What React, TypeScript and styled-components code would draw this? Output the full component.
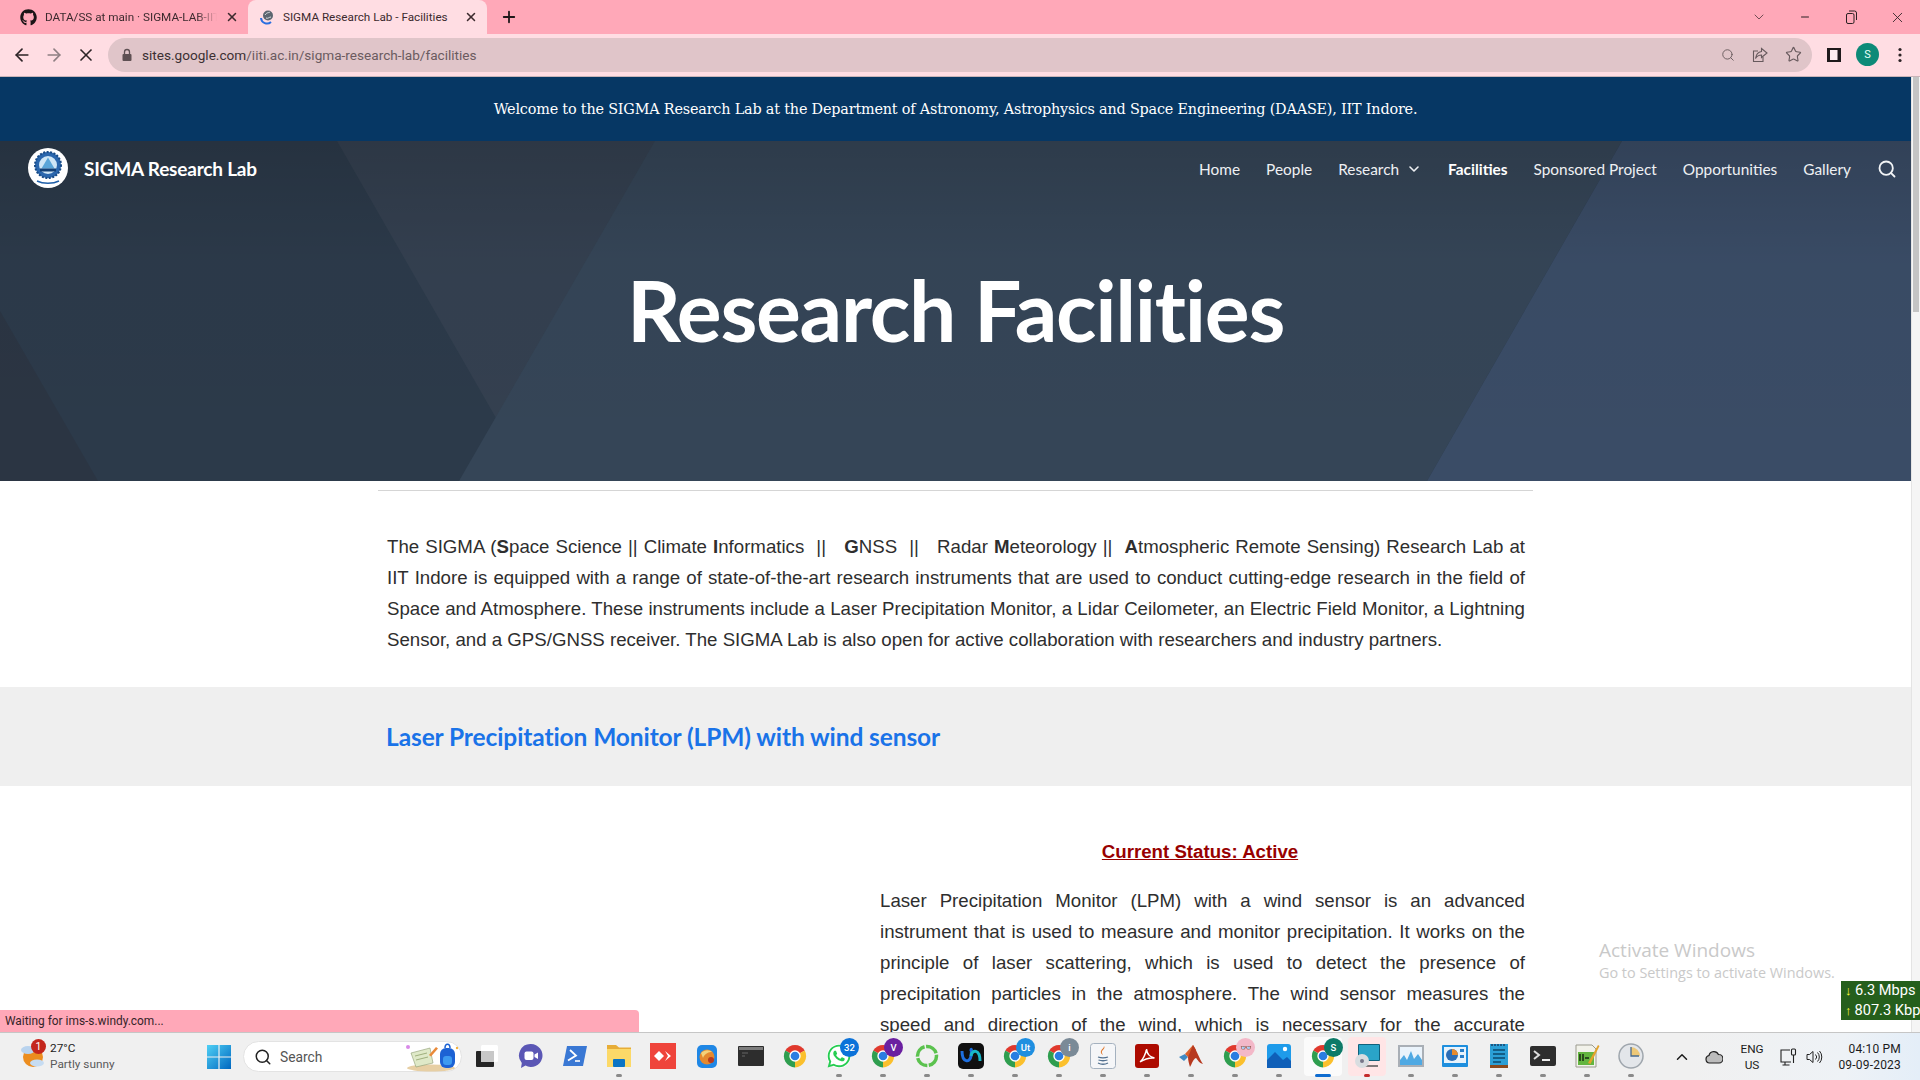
import React from "react";
import styled, { createGlobalStyle } from "styled-components";
import { ArrowLeft, ArrowRight, X, Plus, Search, Star, ChevronDown, ChevronUp, Minus } from "lucide-react";
import { FaGithub, FaWhatsapp } from "react-icons/fa";

const Global = createGlobalStyle`
  html, body { margin: 0; padding: 0; height: 100%; overflow: hidden; background: #fff; }
  #root { height: 100%; }
  * { box-sizing: border-box; }
`;

const Shell = styled.div`
  width: 1920px; height: 1080px; display: flex; flex-direction: column; overflow: hidden;
  font-family: Roboto, "Liberation Sans", sans-serif;
`;

/* Browser tab strip */
const TabStrip = styled.div`
  height: 34px; flex: none; background: #ffa8b8; display: flex; align-items: stretch; padding-left: 8px; color: #3c2a2e;
`;
const Tab = styled.div<{ $active?: boolean }>`
  width: ${p => (p.$active ? "239px" : "240px")}; position: relative; display: flex; align-items: center;
  padding: 0 9px 0 ${p => (p.$active ? "11px" : "12px")}; gap: 8px; font-size: 11.7px;
  background: ${p => (p.$active ? "#ffdde3" : "transparent")};
  border-radius: 8px 8px 0 0;
`;
const TabTitle = styled.span<{ $fade?: boolean }>`
  flex: 1; white-space: nowrap; overflow: hidden;
  ${p => p.$fade && "mask-image: linear-gradient(90deg, #000 88%, transparent 100%);"}
`;
const NewTab = styled.div`
  width: 44px; display: flex; align-items: center; justify-content: center; color: #1f1719;
`;
const WindowControls = styled.div`
  margin-left: auto; display: flex; align-items: center; padding-right: 0; color: #2b2022;
`;
const WinBtn = styled.div`
  width: 46px; height: 28px; display: flex; align-items: center; justify-content: center;
`;

/* Browser toolbar */
const Toolbar = styled.div`
  height: 43px; flex: none; background: #ffdde3; display: flex; align-items: center; padding: 0 0 1px 6px;
  border-bottom: 1px solid #c9b4b8; color: #2c2326;
`;
const NavBtn = styled.div<{ $dim?: boolean }>`
  width: 32px; height: 32px; display: flex; align-items: center; justify-content: center;
  color: ${p => (p.$dim ? "#8f7f83" : "#2c2326")};
`;
const Omnibox = styled.div`
  width: 1704px; height: 34px; margin-left: 6px; border-radius: 17px; background: #e0c5c9; display: flex; align-items: center;
  padding: 0 10px 0 12px; color: #5e5053;
`;
const Url = styled.span`
  margin-left: 8px; font-size: 13.6px; color: #3c3033; white-space: nowrap;
`;
const Path = styled.span`color: #6b5b5f;`;
const OmniIcons = styled.div`
  margin-left: auto; display: flex; align-items: center; gap: 17px; color: #675a5d;
`;
const ToolRight = styled.div`
  display: flex; align-items: center; margin-left: 15px; gap: 15px;
`;
const Avatar = styled.div`
  width: 23px; height: 23px; border-radius: 50%; background: #0d8a78; color: #e8fff9; font-size: 11px; margin-right: 4px;
  display: flex; align-items: center; justify-content: center;
`;

/* Page viewport */
const Viewport = styled.div`
  flex: 1; position: relative; overflow: hidden; display: flex; background: #fff;
`;
const Page = styled.div`
  flex: 1; min-width: 0; height: 100%; overflow: hidden;
`;
const Scrollbar = styled.div`
  width: 9px; flex: none; background: #f5f5f5; border-left: 1px solid #e4e4e4; padding: 0 1px 0 1px;
`;
const Thumb = styled.div`
  height: 235px; background: #c4c4c4; margin-top: 0;
`;
const Banner = styled.div`
  height: 64px; background: #063764; color: #fff; display: flex; align-items: center; justify-content: center;
  font-family: "DejaVu Serif", "Liberation Serif", serif; font-size: 14.4px; letter-spacing: -0.19px; padding-top: 0;
`;
const Hero = styled.header`
  height: 340px; position: relative; overflow: hidden; color: #fff; background: #2b3746;
`;
const HeroArt = styled.svg`
  position: absolute; inset: 0; width: 100%; height: 100%;
`;
const HeroInner = styled.div`
  position: relative; height: 100%; display: flex; flex-direction: column;
`;
const SiteBar = styled.div`
  height: 54px; display: flex; align-items: center; padding: 0 14px 0 28px;
  font-family: Lato, "Liberation Sans", sans-serif;
`;
const Brand = styled.div`
  display: flex; align-items: center; gap: 16px; font-size: 19px; font-weight: 700; letter-spacing: -0.2px;
`;
const Nav = styled.nav`
  margin-left: auto; padding-top: 2px; display: flex; align-items: center; gap: 26px; font-size: 15.4px; color: #f2f4f6;
`;
const NavLink = styled.span<{ $current?: boolean }>`
  display: inline-flex; align-items: center; gap: 7px; white-space: nowrap; font-weight: ${p => (p.$current ? 700 : 400)};
  color: ${p => (p.$current ? "#fff" : "#eef0f3")};
`;
const HeroTitle = styled.h1`
  margin: 60px 0 0; text-align: center; font-family: Lato, "Liberation Sans", sans-serif; font-size: 84px; line-height: 110px;
  font-weight: 700; letter-spacing: -1.3px;
`;
const Rule = styled.hr`
  width: 1155px; margin: 9px 0 0 378px; border: 0; border-top: 1px solid #d5d5d5;
`;
const Intro = styled.p`
  margin: 0; padding: 40px 386px 0 387px; font-family: "Liberation Sans", Arial, sans-serif; font-size: 18.67px; line-height: 31px;
  text-align: justify; color: #2e2e2e; height: 196px;
`;
const Band = styled.div`
  height: 99px; background: #efefef; display: flex; align-items: center; padding: 0 0 0 386px;
`;
const BandTitle = styled.h2`
  margin: 0; font-family: Lato, "Liberation Sans", sans-serif; font-size: 24.5px; font-weight: 700; color: #1a73e8; letter-spacing: -0.1px;
`;
const Feature = styled.section`
  display: grid; grid-template-columns: 880px 645px; padding-top: 50px;
`;
const FeatureText = styled.div`
  grid-column: 2; font-family: "Liberation Sans", Arial, sans-serif; font-size: 18.67px; line-height: 31px; color: #2e2e2e;
`;
const Status = styled.p`
  margin: 0 0 18px; padding-right: 5px; text-align: center; font-weight: 700; color: #980000; text-decoration: underline; line-height: 31px;
`;
const Body = styled.p`
  margin: 0; text-align: justify;
`;

/* Overlays on the viewport */
const StatusBubble = styled.div`
  position: absolute; left: 0; bottom: 0; width: 639px; height: 22px; background: #ffa8b8; border-radius: 0 4px 0 0;
  font-size: 11.9px; color: #352428; display: flex; align-items: center; padding-left: 5px;
`;
const Watermark = styled.div`
  position: absolute; left: 1599px; top: 860px; color: #c9c9c9; font-family: "Open Sans", sans-serif; white-space: nowrap;
`;
const WatermarkTitle = styled.div`font-size: 19px; line-height: 26px;`;
const WatermarkSub = styled.div`font-size: 14.4px; line-height: 20px;`;
const Speed = styled.div`
  position: absolute; right: 0; top: 904px; width: 79px; height: 39px; background: #255f1c; color: #fff;
  font-size: 14.6px; line-height: 19.5px; overflow: hidden; white-space: nowrap; padding-left: 4px;
`;
const SpeedRow = styled.div`display: flex; gap: 3px; align-items: center;`;
const SpeedArrow = styled.span`color: #ffff3a; font-size: 13px; font-weight: 900; width: 7px;`;

/* Taskbar */
const Taskbar = styled.div`
  height: 48px; flex: none; display: flex; align-items: center; border-top: 1px solid #c6c6c6;
  background: linear-gradient(90deg, #f0f0f0 0%, #f0f0f0 88%, #eef2f6 96%, #e4eef8 100%);
  color: #1c1c1c; position: relative;
`;
const Weather = styled.div`
  width: 196px; height: 100%; display: flex; align-items: center; padding: 0 0 2px 20px; gap: 6px;
`;
const WeatherIcon = styled.div`
  width: 24px; height: 24px; position: relative;
`;
const WeatherBadge = styled.span`
  position: absolute; top: -5px; right: -2px; width: 15px; height: 15px; border-radius: 50%; background: #c4261d; color: #fff;
  font-size: 10.5px; display: flex; align-items: center; justify-content: center;
`;
const WeatherText = styled.div`
  font-size: 11.8px; line-height: 16px;
`;
const Muted = styled.div`color: #5a5a5a;`;
const Start = styled.div`
  width: 46px; display: flex; align-items: center; justify-content: center;
`;
const SearchPill = styled.div`
  width: 219px; height: 31px; margin-left: 1px; border-radius: 16px; background: #fff; border: 1px solid #e3e3e3; display: flex; align-items: center;
  padding: 0 2px 0 10px; font-size: 13.8px; color: #555; gap: 8px;
`;
const PillArt = styled.div`margin-left: auto; display: flex;`;
const Dock = styled.div`
  display: flex; margin-left: 3px;
`;
const DockItem = styled.div<{ $tone?: "active" | "alert" }>`
  width: 44px; height: 47px; position: relative; display: flex; align-items: center; justify-content: center; padding-bottom: 1px;
  &::before {
    content: ""; position: absolute; top: 4px; bottom: 4px; left: 3px; right: 3px; border-radius: 4px;
    background: ${p => (p.$tone === "active" ? "#fbfbfb" : p.$tone === "alert" ? "#ffe5e6" : "transparent")};
  }
  & > * { position: relative; }
`;
const Dot = styled.span<{ $kind: "gray" | "blue" | "red" }>`
  position: absolute !important; bottom: 3px; left: 50%; transform: translateX(-50%); height: 3px; border-radius: 2px;
  width: ${p => (p.$kind === "blue" ? "16px" : "6px")};
  background: ${p => (p.$kind === "blue" ? "#0f6cd0" : p.$kind === "red" ? "#c42b2b" : "#8a8a8a")};
`;
const IconWrap = styled.div`
  width: 26px; height: 26px; display: flex; position: relative;
`;
const Badge = styled.span<{ $bg: string }>`
  position: absolute; top: -5px; right: -7px; width: 19px; height: 19px; border-radius: 50%; background: ${p => p.$bg}; color: #fff;
  font-size: 9.5px; display: flex; align-items: center; justify-content: center; font-weight: 500;
`;
const Tray = styled.div`
  margin-left: auto; width: 254px; height: 100%; display: flex; align-items: center;
`;
const TrayCell = styled.div<{ $w: number }>`
  width: ${p => p.$w}px; display: flex; align-items: center; justify-content: center; text-align: center; font-size: 11.8px; line-height: 16px;
`;
const Clock = styled.div`
  margin-left: auto; padding-right: 19px; text-align: right; font-size: 12px; line-height: 16px; letter-spacing: 0.2px;
`;

/* Drawn icons */
const Chrome = () => (
  <svg width="26" height="26" viewBox="0 0 48 48">
    <path d="M24 24 6 14A21 21 0 0 1 42 14Z" fill="#e0392d" />
    <path d="M24 24 42 14A21 21 0 0 1 24 45Z" fill="#fbc02d" />
    <path d="M24 24V45A21 21 0 0 1 6 14Z" fill="#2f9e4f" />
    <circle cx="24" cy="24" r="10.5" fill="#fff" />
    <circle cx="24" cy="24" r="8" fill="#2a7de1" />
  </svg>
);
const TaskView = () => (
  <svg width="26" height="26" viewBox="0 0 26 26">
    <rect x="7" y="2" width="17" height="17" rx="1.5" fill="#fff" />
    <rect x="2" y="8" width="18" height="16" rx="1" fill="#252525" />
    <rect x="7" y="8" width="13" height="11" fill="#c8c8c8" />
  </svg>
);
const Meet = () => (
  <svg width="26" height="26" viewBox="0 0 26 26">
    <path d="M13 1a11.5 11.5 0 1 1-5.5 21.6L3 25l.8-5A11.5 11.5 0 0 1 13 1Z" fill="#5b57b5" />
    <rect x="6.5" y="8.5" width="9" height="8.5" rx="2" fill="#fff" />
    <path d="m16.5 11.5 3.5-2v6.400l-3.500-2Z" fill="#fff" />
  </svg>
);
const PowerShell = () => (
  <svg width="26" height="26" viewBox="0 0 26 26">
    <path d="M5 3h20l-4 20H1Z" fill="#3a78d4" />
    <path d="m8 7 6 5.500-8 5" fill="none" stroke="#fff" strokeWidth="1.800" />
    <path d="M13 18h5" stroke="#fff" strokeWidth="1.600" />
  </svg>
);
const Folder = () => (
  <svg width="26" height="26" viewBox="0 0 26 26">
    <path d="M1 2h9l3 2.500h12V24H1Z" fill="#e7ad37" />
    <rect x="1" y="6" width="24" height="18" fill="#fcd968" />
    <rect x="7" y="16" width="12" height="8" rx="1" fill="#0a74c4" />
  </svg>
);
const AnyDesk = () => (
  <svg width="26" height="26" viewBox="0 0 26 26">
    <rect width="26" height="26" fill="#ef443b" />
    <path d="m9 8 5 5-5 5-5-5Z" fill="#fff" />
    <path d="m15 8 6 5-6 5 3-5Z" fill="#fff" />
  </svg>
);
const Orb = () => (
  <svg width="26" height="26" viewBox="0 0 26 26">
    <rect x="3" y="2" width="20" height="23" rx="5" fill="#1f87e5" />
    <circle cx="13" cy="14" r="7.500" fill="#e4892e" />
    <path d="M7 10c4-4 9-3 11-1-3 0-7 1-9 6Z" fill="#f3d27a" />
    <circle cx="17" cy="17" r="3" fill="#b73a1f" />
  </svg>
);
const CmdBox = () => (
  <svg width="26" height="26" viewBox="0 0 26 26">
    <rect y="3" width="26" height="20" rx="1" fill="#2d2d2d" />
    <rect x="1" y="4" width="24" height="3" fill="#7c7c7c" />
    <path d="M4 10h6M4 13h3" stroke="#666" strokeWidth="1" />
  </svg>
);
const Whats = () => (
  <>
    <svg width="26" height="26" viewBox="0 0 26 26"><circle cx="13" cy="13" r="12" fill="#fff" /></svg>
    <FaWhatsapp size={26} color="#27cd52" style={{ position: "absolute", left: 0, top: 0 }} />
  </>
);
const Ring = () => (
  <svg width="26" height="26" viewBox="0 0 26 26">
    <circle cx="13" cy="13" r="9.500" fill="none" stroke="#5bc24e" strokeWidth="3.500" strokeDasharray="13 1.500" />
  </svg>
);
const Webex = () => (
  <svg width="26" height="26" viewBox="0 0 26 26">
    <rect width="26" height="26" rx="5" fill="#101010" />
    <path d="M4 8c0 12 8 12 9 5s0-8 0-5" fill="none" stroke="#1d6fe0" strokeWidth="3" />
    <path d="M22 18c0-12-8-12-9-5" fill="none" stroke="#18b7c9" strokeWidth="3" />
  </svg>
);
const JavaBox = () => (
  <svg width="26" height="26" viewBox="0 0 26 26">
    <rect x=".5" y=".5" width="25" height="25" rx="3" fill="#f5f6f8" stroke="#a4b1bf" />
    <path d="M14 3c2 3-3 4-2 7 .4 1 1 1.500 1 2-2-1-3-3-1.500-5C12.500 5.500 14 5 14 3Z" fill="#e0762a" />
    <path d="M8 14c3 1 7 1 10 0M8.500 17c3 1 6 1 9 0M8 20c3 1.500 7 1.500 10 0" fill="none" stroke="#52708f" strokeWidth="1.300" />
  </svg>
);
const Acrobat = () => (
  <svg width="26" height="26" viewBox="0 0 26 26">
    <rect x="1" y="1" width="24" height="24" rx="3" fill="#ad0b00" />
    <path d="M6 19c3-2 6-9 6.500-13 .5 5 3 8 8 9-5-.5-10 1-14.500 4Z" fill="none" stroke="#fff" strokeWidth="1.500" />
  </svg>
);
const Matlab = () => (
  <svg width="26" height="26" viewBox="0 0 26 26">
    <path d="M1 14 7 11l3 3-4 4Z" fill="#3f8ac4" />
    <path d="M7 11 15 2l3 5-8 7Z" fill="#d9602b" />
    <path d="M15 2c3 4 7 15 10 19-4-1-5-4-7-6-3 1-4 6-6 9-1-3-2-7-2-10Z" fill="#b7391f" />
  </svg>
);
const Photos = () => (
  <svg width="26" height="26" viewBox="0 0 26 26">
    <rect x="1" y="1" width="24" height="24" rx="3" fill="#1e9bea" />
    <path d="M1 25V17L9 9l8 8 4-3 4 4v7Z" fill="#0f5fb8" />
    <circle cx="19" cy="6" r="2.200" fill="#fff" />
  </svg>
);
const ChromeBase = Chrome;
const RemoteBox = () => (
  <svg width="26" height="26" viewBox="0 0 26 26">
    <rect x="4" y="1" width="22" height="17" rx="1" fill="#11617c" />
    <rect x="5" y="2" width="20" height="15" fill="#2aa4c8" />
    <path d="M9 23h15" stroke="#555" strokeWidth="1.500" />
    <circle cx="8" cy="18" r="7" fill="#d8dde0" />
    <circle cx="8" cy="18" r="2" fill="#778" />
  </svg>
);
const Perf = () => (
  <svg width="26" height="26" viewBox="0 0 26 26">
    <rect y="2" width="26" height="22" fill="#a9afb6" />
    <rect x="2" y="4" width="22" height="18" fill="#eaf3fb" />
    <path d="M2 22v-5l4-5 3 5 4-9 3 8 4-5 4 6v5Z" fill="#4fa9e3" />
  </svg>
);
const Panel = () => (
  <svg width="26" height="26" viewBox="0 0 26 26">
    <rect y="2" width="26" height="22" rx="1" fill="#1e8fde" />
    <rect x="2" y="4" width="22" height="16" fill="#e7f3fc" />
    <circle cx="10" cy="12" r="6" fill="#2a6db6" />
    <path d="M10 12V6a6 6 0 0 1 6 6Z" fill="#e78a2c" />
    <rect x="18" y="6" width="4" height="3" fill="#2a7fc8" />
    <rect x="18" y="12" width="4" height="3" fill="#2a7fc8" />
  </svg>
);
const Note = () => (
  <svg width="26" height="26" viewBox="0 0 26 26">
    <rect x="4" y="1" width="18" height="22" fill="#2b9fd6" />
    <rect x="4" y="22" width="18" height="3" fill="#8a4a1e" />
    <path d="M6 1v2M9 1v2M12 1v2M15 1v2M18 1v2" stroke="#113" strokeWidth="1" />
    <path d="M7 7h12M7 11h12M7 15h12M7 19h8" stroke="#0c4a6e" strokeWidth="1.500" />
  </svg>
);
const Term = () => (
  <svg width="26" height="26" viewBox="0 0 26 26">
    <rect y="3" width="26" height="20" rx="2" fill="#2e2e2e" />
    <path d="m4 8 5 4-5 4" fill="none" stroke="#ddd" strokeWidth="2" />
    <path d="M12 17h8" stroke="#eee" strokeWidth="2" />
  </svg>
);
const GreenDoc = () => (
  <svg width="26" height="26" viewBox="0 0 26 26">
    <path d="M2 2h16l4 4v18H2Z" fill="#f2f2ea" stroke="#9b9b8e" />
    <rect x="4" y="9" width="16" height="13" fill="#63b53f" />
    <path d="M6 11v7M9 11v7M11 15h4" stroke="#1a2a12" strokeWidth="1.500" />
    <path d="m14 20 10-18 1.500 1-9 18Z" fill="#e3a32a" />
  </svg>
);
const ClockIcon = () => (
  <svg width="26" height="26" viewBox="0 0 26 26">
    <circle cx="13" cy="13" r="12" fill="#e3e6ea" stroke="#9fa6ad" strokeWidth="1.500" />
    <path d="M13 13V4a9 9 0 0 1 9 9Z" fill="#edc877" />
    <path d="M13 4v9h8" fill="none" stroke="#4a6b8f" strokeWidth="1.300" />
  </svg>
);
const Windows = () => (
  <svg width="24" height="24" viewBox="0 0 24 24">
    <defs>
      <linearGradient id="winG" x1="0" y1="0" x2="1" y2="1"><stop offset="0" stopColor="#4fd0f5" /><stop offset="1" stopColor="#0067c0" /></linearGradient>
    </defs>
    <path d="M0 0h11.400v11.400H0ZM12.600 0H24v11.400H12.600ZM0 12.600h11.400V24H0ZM12.600 12.600H24V24H12.600Z" fill="url(#winG)" />
  </svg>
);
const PillIllustration = () => (
  <svg width="54" height="30" viewBox="0 0 54 30">
    <ellipse cx="26" cy="26" rx="24" ry="3.500" fill="#e7cfa4" />
    <path d="m6 11 19-5 3 15-17 4Z" fill="#dfe9c8" stroke="#8b9a70" strokeWidth=".6" />
    <path d="M10 14l12-3M11 18l12-3" stroke="#9fb07d" />
    <path d="m24 13 7-8 2 1.500-7 8Z" fill="#e98a3a" />
    <rect x="35" y="6" width="15" height="20" rx="6" fill="#1c62d4" />
    <rect x="38" y="14" width="9" height="9" rx="3" fill="#3d9af0" />
    <path d="M40 6c0-5 5-5 5 0" fill="none" stroke="#1c62d4" strokeWidth="1.500" />
    <circle cx="3" cy="5" r="2" fill="#d88ae8" />
    <circle cx="52" cy="6" r="1.200" fill="#f3b13c" />
  </svg>
);
const WeatherArt = () => (
  <svg width="24" height="24" viewBox="0 0 24 24">
    <circle cx="13" cy="13" r="10" fill="#ec8d1f" />
    <ellipse cx="8" cy="6" rx="7" ry="4" fill="#b9d3ee" />
    <ellipse cx="17" cy="19" rx="7" ry="3.500" fill="#c6dcf2" />
  </svg>
);
const Emblem = () => (
  <svg width="40" height="40" viewBox="0 0 40 40">
    <circle cx="20" cy="20" r="20" fill="#fff" />
    <circle cx="20" cy="17" r="13" fill="#2a66ad" stroke="#174a86" strokeWidth="2" strokeDasharray="2 1.500" />
    <circle cx="20" cy="17" r="9" fill="#cfe6f6" />
    <path d="M20 9.500l6.500 11h-13Z" fill="#5aa5d8" />
    <path d="M12 20.500h16v3H12Z" fill="#123f75" />
    <path d="M9 33c6 3 16 3 22 0" fill="none" stroke="#1f5fa8" strokeWidth="1.500" />
  </svg>
);
const SitesFav = () => (
  <svg width="16" height="16" viewBox="0 0 16 16">
    <path d="M2 9a6 6 0 0 0 10 4" fill="none" stroke="#2b6fe0" strokeWidth="2" />
    <circle cx="9" cy="6.500" r="5" fill="#5c6670" />
    <path d="M6 6c2-3 4-2 5-3M7 9c2 1 3-1 5-1" stroke="#dfe3e6" strokeWidth="1" fill="none" />
  </svg>
);
const Lock = () => (
  <svg width="14" height="14" viewBox="0 0 14 14">
    <rect x="2.500" y="6" width="9" height="7" rx="1" fill="#5e5053" />
    <path d="M4.500 6V4a2.500 2.500 0 0 1 5 0v2" fill="none" stroke="#5e5053" strokeWidth="1.300" />
  </svg>
);
const ShareIcon = () => (
  <svg width="16" height="16" viewBox="0 0 16 16" fill="none" stroke="currentColor" strokeWidth="1.100">
    <path d="M6 4H1.500v10.500H11V10" />
    <path d="M9.500 1.500 15 6l-5.500 4.500V8C7 8 5 9 3.500 11.500 4 8 6 5 9.500 4.500Z" />
  </svg>
);
const SidePanel = () => (
  <svg width="14" height="14" viewBox="0 0 14 14">
    <rect width="14" height="14" fill="#1f1a1c" />
    <rect x="3" y="2" width="7.500" height="10" fill="#ffeef1" />
  </svg>
);
const Kebab = () => (
  <svg width="4" height="16" viewBox="0 0 4 16" fill="#2c2326">
    <circle cx="2" cy="2.500" r="1.600" /><circle cx="2" cy="8" r="1.600" /><circle cx="2" cy="13.500" r="1.600" />
  </svg>
);
const Restore = () => (
  <svg width="11" height="14" viewBox="0 0 11 14" fill="none" stroke="currentColor">
    <rect x=".5" y="3.500" width="7.500" height="10" rx="1.500" />
    <path d="M3 1h5.500A2 2 0 0 1 10.500 3v7" />
  </svg>
);
const HeroPolygons = () => (
  <HeroArt viewBox="0 0 1911 340" preserveAspectRatio="none">
    <defs>
      <linearGradient id="topShade" x1="0" y1="0" x2="0" y2="1">
        <stop offset="0" stopColor="#000" stopOpacity=".14" />
        <stop offset=".35" stopColor="#000" stopOpacity=".02" />
        <stop offset="1" stopColor="#000" stopOpacity="0" />
      </linearGradient>
    </defs>
    <rect width="1911" height="340" fill="#2c3a4a" />
    <path d="M0 170 98 340H0Z" fill="#2b3543" />
    <path d="M337 0H660L496 277Z" fill="#344050" />
    <path d="M655 0H1622L1427 340H459Z" fill="#354557" />
    <path d="M1622 0H1911V340H1427Z" fill="#3a4c66" />
    <rect width="1911" height="340" fill="url(#topShade)" />
  </HeroArt>
);

type DockEntry = { icon: React.ReactNode; dot?: "gray" | "blue" | "red"; tone?: "active" | "alert"; badge?: { text: string; bg: string } };
const dock: DockEntry[] = [
  { icon: <TaskView /> },
  { icon: <Meet /> },
  { icon: <PowerShell /> },
  { icon: <Folder />, dot: "gray" },
  { icon: <AnyDesk /> },
  { icon: <Orb /> },
  { icon: <CmdBox /> },
  { icon: <Chrome /> },
  { icon: <Whats />, dot: "gray", badge: { text: "32", bg: "#0b72d9" } },
  { icon: <Chrome />, dot: "gray", badge: { text: "V", bg: "#6a1fa0" } },
  { icon: <Ring />, dot: "gray" },
  { icon: <Webex />, dot: "gray" },
  { icon: <Chrome />, dot: "gray", badge: { text: "Ut", bg: "#1f8fe0" } },
  { icon: <Chrome />, dot: "gray", badge: { text: "i", bg: "#7a8a97" } },
  { icon: <JavaBox />, dot: "gray" },
  { icon: <Acrobat />, dot: "gray" },
  { icon: <Matlab />, dot: "gray" },
  { icon: <Chrome />, dot: "gray", badge: { text: "👓", bg: "#f3b8c8" } },
  { icon: <Photos />, dot: "gray" },
  { icon: <ChromeBase />, dot: "blue", tone: "active", badge: { text: "S", bg: "#0d7a68" } },
  { icon: <RemoteBox />, dot: "red", tone: "alert" },
  { icon: <Perf />, dot: "gray" },
  { icon: <Panel />, dot: "gray" },
  { icon: <Note />, dot: "gray" },
  { icon: <Term />, dot: "gray" },
  { icon: <GreenDoc />, dot: "gray" },
  { icon: <ClockIcon />, dot: "gray" },
];

export default function App() {
  return (
    <Shell>
      <Global />
      <TabStrip>
        <Tab>
          <FaGithub size={17} color="#1b1416" />
          <TabTitle $fade>DATA/SS at main · SIGMA-LAB-IITI/SIGMA</TabTitle>
          <X size={14} strokeWidth={2.6} />
        </Tab>
        <Tab $active>
          <SitesFav />
          <TabTitle>SIGMA Research Lab - Facilities</TabTitle>
          <X size={14} strokeWidth={2.6} />
        </Tab>
        <NewTab><Plus size={18} strokeWidth={2.4} /></NewTab>
        <WindowControls>
          <WinBtn><ChevronDown size={16} strokeWidth={1} /></WinBtn>
          <WinBtn><Minus size={12} strokeWidth={2} /></WinBtn>
          <WinBtn><Restore /></WinBtn>
          <WinBtn><X size={17} strokeWidth={1.2} /></WinBtn>
        </WindowControls>
      </TabStrip>
      <Toolbar>
        <NavBtn><ArrowLeft size={20} strokeWidth={2} /></NavBtn>
        <NavBtn $dim><ArrowRight size={20} strokeWidth={2} /></NavBtn>
        <NavBtn><X size={20} strokeWidth={2} /></NavBtn>
        <Omnibox>
          <Lock />
          <Url>sites.google.com<Path>/iiti.ac.in/sigma-research-lab/facilities</Path></Url>
          <OmniIcons>
            <Search size={14} strokeWidth={1.6} />
            <ShareIcon />
            <Star size={17} strokeWidth={1.6} />
          </OmniIcons>
        </Omnibox>
        <ToolRight>
          <SidePanel />
          <Avatar>S</Avatar>
          <Kebab />
        </ToolRight>
      </Toolbar>
      <Viewport>
        <Page>
          <Banner>Welcome to the SIGMA Research Lab at the Department of Astronomy, Astrophysics and Space Engineering (DAASE), IIT Indore.</Banner>
          <Hero>
            <HeroPolygons />
            <HeroInner>
              <SiteBar>
                <Brand><Emblem />SIGMA Research Lab</Brand>
                <Nav>
                  <NavLink>Home</NavLink>
                  <NavLink>People</NavLink>
                  <NavLink>Research <ChevronDown size={16} strokeWidth={2.4} /></NavLink>
                  <NavLink $current>Facilities</NavLink>
                  <NavLink>Sponsored Project</NavLink>
                  <NavLink>Opportunities</NavLink>
                  <NavLink>Gallery</NavLink>
                  <Search size={20} strokeWidth={2.2} />
                </Nav>
              </SiteBar>
              <HeroTitle>Research Facilities</HeroTitle>
            </HeroInner>
          </Hero>
          <Rule />
          <Intro>
            The SIGMA (<b>S</b>pace Science || Climate <b>I</b>nformatics &nbsp;|| &nbsp; <b>G</b>NSS &nbsp;|| &nbsp; Radar <b>M</b>eteorology || &nbsp;<b>A</b>tmospheric Remote Sensing) Research Lab at IIT Indore is equipped with a range of state-of-the-art research instruments that are used to conduct cutting-edge research in the field of Space and Atmosphere. These instruments include a Laser Precipitation Monitor, a Lidar Ceilometer, an Electric Field Monitor, a Lightning Sensor, and a GPS/GNSS receiver. The SIGMA Lab is also open for active collaboration with researchers and industry partners.
          </Intro>
          <Band><BandTitle>Laser Precipitation Monitor (LPM) with wind sensor</BandTitle></Band>
          <Feature>
            <FeatureText>
              <Status>Current Status: Active</Status>
              <Body>Laser Precipitation Monitor (LPM) with a wind sensor is an advanced instrument that is used to measure and monitor precipitation. It works on the principle of laser scattering, which is used to detect the presence of precipitation particles in the atmosphere. The wind sensor measures the speed and direction of the wind, which is necessary for the accurate measurement of precipitation.</Body>
            </FeatureText>
          </Feature>
        </Page>
        <Scrollbar><Thumb /></Scrollbar>
        <StatusBubble>Waiting for ims-s.windy.com...</StatusBubble>
        <Watermark>
          <WatermarkTitle>Activate Windows</WatermarkTitle>
          <WatermarkSub>Go to Settings to activate Windows.</WatermarkSub>
        </Watermark>
        <Speed>
          <SpeedRow><SpeedArrow>↓</SpeedArrow>6.3 Mbps</SpeedRow>
          <SpeedRow><SpeedArrow>↑</SpeedArrow>807.3 Kbps</SpeedRow>
        </Speed>
      </Viewport>
      <Taskbar>
        <Weather>
          <WeatherIcon><WeatherArt /><WeatherBadge>1</WeatherBadge></WeatherIcon>
          <WeatherText>27°C<Muted>Partly sunny</Muted></WeatherText>
        </Weather>
        <Start><Windows /></Start>
        <SearchPill>
          <Search size={18} strokeWidth={2} color="#222" />Search
          <PillArt><PillIllustration /></PillArt>
        </SearchPill>
        <Dock>
          {dock.map((d, i) => (
            <DockItem key={i} $tone={d.tone}>
              <IconWrap>
                {d.icon}
                {d.badge && <Badge $bg={d.badge.bg}>{d.badge.text}</Badge>}
              </IconWrap>
              {d.dot && <Dot $kind={d.dot} />}
            </DockItem>
          ))}
        </Dock>
        <Tray>
          <TrayCell $w={32}><ChevronUp size={18} strokeWidth={2} /></TrayCell>
          <TrayCell $w={32}>
            <svg width="18" height="14" viewBox="0 0 18 14"><path d="M4.500 13a3.800 3.800 0 0 1-.5-7.500 5 5 0 0 1 9.400-1A4.200 4.200 0 0 1 14 13Z" fill="#bcbcbc" stroke="#222" strokeWidth="1.200" /></svg>
          </TrayCell>
          <TrayCell $w={44}>ENG<br />US</TrayCell>
          <TrayCell $w={30}>
            <svg width="18" height="18" viewBox="0 0 18 18" fill="none" stroke="#222" strokeWidth="1.100"><path d="M11 14H1V2h9M5 14v3M2.500 17h7" /><rect x="11.500" y="1" width="4" height="6" rx="1" /><path d="M13.500 7v8" /></svg>
          </TrayCell>
          <TrayCell $w={20}>
            <svg width="17" height="16" viewBox="0 0 17 16" fill="none" stroke="#222" strokeWidth="1"><path d="M1 5.500h2.500L7 2.500v11L3.500 10.500H1Z" /><path d="M9.500 5.500a3.500 3.500 0 0 1 0 5M11.500 3.500a6.500 6.500 0 0 1 0 9M13.500 2a9 9 0 0 1 0 12" /></svg>
          </TrayCell>
          <Clock>04:10 PM<br />09-09-2023</Clock>
        </Tray>
      </Taskbar>
    </Shell>
  );
}
